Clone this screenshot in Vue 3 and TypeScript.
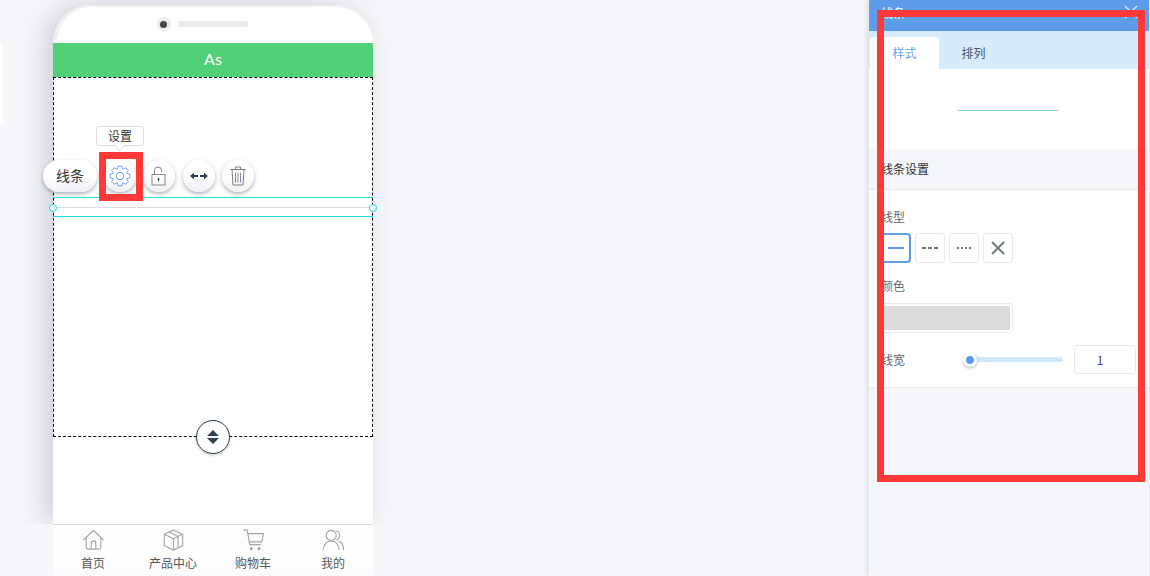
<script setup lang="ts">
const navItems = ["首页", "产品中心", "购物车", "我的"];
const lineTypes = ["solid", "dashed", "dotted", "none"];

// 8-tooth cog outline for the settings button
const gearPath = (() => {
  const pts: string[] = [];
  for (let i = 0; i < 8; i++) {
    const a = (i * Math.PI) / 4;
    const steps: [number, number][] = [
      [7.4, a - 0.34],
      [10, a - 0.2],
      [10, a + 0.2],
      [7.4, a + 0.34],
    ];
    for (const [r, t] of steps) {
      pts.push(`${(11 + r * Math.cos(t)).toFixed(2)} ${(11 + r * Math.sin(t)).toFixed(2)}`);
    }
  }
  return "M" + pts.join("L") + "Z";
})();
</script>

<template>
  <div class="page">
    <div class="stage">
      <div class="side-tabs">
        <div class="side-tab"></div>
        <div class="side-tab"></div>
      </div>
      <div class="phone">
        <div class="phone-body">
          <div class="phone-top">
            <span class="camera"><i></i></span>
            <span class="speaker"></span>
          </div>
          <div class="phone-title">As</div>
          <div class="canvas">
            <div class="selection">
              <div class="tooltip">设置</div>
              <div class="toolbar">
                <button class="tool pill">线条</button>
                <button class="tool">
                  <svg width="22" height="22" viewBox="0 0 22 22" fill="none" stroke="#6f9ff0" stroke-width="1">
                    <path :d="gearPath" stroke-linejoin="round" />
                    <circle cx="11" cy="11" r="3.8" />
                  </svg>
                </button>
                <button class="tool">
                  <svg width="16" height="20" viewBox="0 0 16 20" fill="none" stroke-width="1">
                    <path d="M3.500 8V4.500a3.500 3.500 0 0 1 7 0V6" stroke="#8a8078" />
                    <rect x="1" y="8.500" width="13" height="10.500" stroke="#7f8aa0" />
                    <circle cx="7.500" cy="13" r="1" fill="#2f3b4c" stroke="none" />
                    <path d="M7.500 13v2" stroke="#2f3b4c" />
                  </svg>
                </button>
                <button class="tool">
                  <svg width="18" height="8" viewBox="0 0 18 8" fill="#2f3b4c">
                    <path d="M0 4l4-3.200v2.200h4v2H4v2.200zM18 4l-4-3.200v2.200h-4v2h4v2.200z" />
                  </svg>
                </button>
                <button class="tool">
                  <svg width="16" height="20" viewBox="0 0 16 20" fill="none" stroke="#85796f" stroke-width="1">
                    <path d="M0.500 3.500h15M5.500 3.500V1h5v2.500M2 3.500l1 15.500h10l1-15.500" />
                    <path d="M5.500 6.500v10M8 6.500v10M10.500 6.500v10" stroke="#7f8aa0" />
                  </svg>
                </button>
              </div>
              <div class="line-box">
                <span class="line-rule"></span>
                <span class="handle left"></span>
                <span class="handle right"></span>
              </div>
              <div class="resize">
                <svg width="12" height="14" viewBox="0 0 12 14" fill="#2e4358">
                  <path d="M6 0l6 6H0zM6 14L0 8h12z" />
                </svg>
              </div>
              <span class="mark"></span>
            </div>
          </div>
        </div>
        <div class="nav-wrap">
          <div class="nav">
            <div v-for="(item, i) in navItems" :key="item" class="nav-item">
              <svg width="23" height="22" viewBox="0 0 24 24" fill="none" stroke="#a3a3a3" stroke-width="1.200">
                <template v-if="i === 0">
                  <path d="M1 12L12 1.500 23 12M4 9.500v10.500a2 2 0 0 0 2 2h12a2 2 0 0 0 2-2V9.500" />
                  <path d="M9.500 22v-6.500a2.500 2.500 0 0 1 5 0V22" />
                </template>
                <template v-else-if="i === 1">
                  <path d="M12 1l10 4.800v12.400L12 23 2 18.200V5.800z" />
                  <path d="M2 5.800l10 4.700 10-4.700M12 10.500V23M7 3.400l10 4.800v12.400" />
                </template>
                <template v-else-if="i === 2">
                  <path d="M1 1h4l3 16h12M5.800 5H23l-2 9H7.400" />
                  <circle cx="9.500" cy="21.500" r="1" fill="#8a8a8a" />
                  <circle cx="18" cy="21.500" r="1" fill="#8a8a8a" />
                </template>
                <template v-else>
                  <circle cx="9.500" cy="7" r="5.500" />
                  <path d="M1 23c0-6 3.500-10 8.500-10s8.500 4 8.500 10M15 1.800a5.500 5.500 0 0 1 0 10.400M18 13.500c3 1.200 5 4.500 5 9.500" />
                </template>
              </svg>
              <span>{{ item }}</span>
            </div>
          </div>
          <div class="nav-base"></div>
        </div>
      </div>
    </div>

    <aside class="panel">
      <header class="panel-head">
        <span>线条</span>
        <svg width="14" height="14" viewBox="0 0 14 14" stroke="#e8f1fc" stroke-width="1.200">
          <path d="M1 1l12 12M13 1L1 13" />
        </svg>
      </header>
      <div class="tabs">
        <div class="tab active">样式</div>
        <div class="tab">排列</div>
      </div>
      <div class="preview"><span></span></div>
      <div class="section-head">线条设置</div>
      <div class="form">
        <div class="label">线型</div>
        <div class="types">
          <div v-for="(t, i) in lineTypes" :key="t" class="type" :class="{ active: i === 0 }">
            <span v-if="t !== 'none'" class="stroke" :class="t"></span>
            <svg v-else width="14" height="14" viewBox="0 0 14 14" stroke="#6f7680" stroke-width="1.800">
              <path d="M1 1l12 12M13 1L1 13" />
            </svg>
          </div>
        </div>
        <div class="label colour-label">颜色</div>
        <div class="colour"><span></span></div>
        <div class="width-row">
          <div class="label">线宽</div>
          <div class="slider"><span class="thumb"></span></div>
          <div class="num">1</div>
        </div>
      </div>
    </aside>
    <span class="outline"></span>
  </div>
</template>

<style scoped>
.page {
  position: relative;
  display: flex;
  height: 576px;
  overflow: hidden;
  background: #f6f7fb;
  font-family: "Noto Sans CJK SC", "Liberation Sans", sans-serif;
  font-size: 12px;
  color: #444;
}
.stage {
  flex: 0 0 869px;
  display: flex;
  align-items: flex-start;
}
.side-tabs {
  flex: 0 0 3px;
  margin-top: 43px;
  display: flex;
  flex-direction: column;
  gap: 1px;
}
.side-tab {
  height: 40px;
  background: #fff;
}
.phone {
  width: 320px;
  height: 571px;
  margin: 5px 0 0 50px;
  display: flex;
  flex-direction: column;
}
.phone-body {
  height: 519px;
  background: #fff;
  border-radius: 38px 38px 0 0;
  box-shadow: -8px 0 26px rgba(60, 70, 90, 0.22);
  display: flex;
  flex-direction: column;
}
.phone-top {
  height: 38px;
  flex: none;
  box-sizing: border-box;
  border: solid #f0f0f0;
  border-width: 2px 0 0 4px;
  border-radius: 38px 38px 0 0;
  padding: 0 26px 2px 0;
  display: flex;
  align-items: center;
  justify-content: center;
  gap: 7px;
  background: #fff;
}
.camera {
  width: 14px;
  height: 14px;
  border-radius: 50%;
  background: #ececec;
  display: flex;
  align-items: center;
  justify-content: center;
}
.camera i {
  width: 7px;
  height: 7px;
  border-radius: 50%;
  background: #444;
}
.speaker {
  width: 70px;
  height: 6px;
  border-radius: 3px;
  background: #ebebeb;
}
.phone-title {
  height: 34px;
  flex: none;
  background: #50d077;
  color: #fff;
  font-family: Lato, sans-serif;
  font-size: 16px;
  line-height: 32px;
  text-align: center;
}
.canvas {
  flex: 1;
  background: #fff;
}
.selection {
  position: relative;
  height: 360px;
  box-sizing: border-box;
  border: 1px dashed #000;
}
.tooltip {
  position: absolute;
  left: 42px;
  top: 48px;
  width: 48px;
  height: 20px;
  box-sizing: border-box;
  border: 1px solid #ddd;
  border-radius: 3px;
  background: #fff;
  line-height: 18px;
  text-align: center;
  color: #333;
}
.tooltip::after {
  content: "";
  position: absolute;
  left: 19px;
  bottom: -5px;
  width: 7px;
  height: 7px;
  background: #fff;
  transform: rotate(45deg);
  border-right: 1px solid #e4e4e4;
  border-bottom: 1px solid #e4e4e4;
  box-sizing: border-box;
}
.toolbar {
  position: absolute;
  left: -11px;
  top: 82px;
  display: flex;
  gap: 7.200px;
}
.tool {
  width: 32px;
  height: 32px;
  padding: 0;
  border: 0;
  border-radius: 16px;
  background: linear-gradient(#fff 50%, #eff0f3);
  box-shadow: 0 2px 4px rgba(50, 60, 80, 0.4);
  display: flex;
  align-items: center;
  justify-content: center;
  font: inherit;
  font-size: 14px;
  line-height: 30px;
  color: #333;
}
.tool.pill {
  width: 54px;
  padding-bottom: 2px;
}
.line-box {
  position: absolute;
  left: -1px;
  right: -1px;
  top: 119px;
  height: 20px;
  box-sizing: border-box;
  border-top: 1px solid #19e0ea;
  border-bottom: 1px solid #19e0ea;
}
.line-rule {
  position: absolute;
  left: 0;
  right: 0;
  top: 9px;
  height: 1px;
  background: #dcdcdc;
}
.handle {
  position: absolute;
  top: 6px;
  width: 8px;
  height: 8px;
  box-sizing: border-box;
  border: 1px solid #19d8e6;
  border-radius: 50%;
  background: #fff;
}
.handle.left {
  left: -4px;
}
.handle.right {
  right: -4px;
}
.resize {
  position: absolute;
  left: 142px;
  bottom: -18px;
  width: 34px;
  height: 34px;
  box-sizing: border-box;
  border: 1px solid #2e4358;
  border-radius: 50%;
  background: #fff;
  box-shadow: 0 1px 3px rgba(46, 67, 88, 0.3);
  display: flex;
  align-items: center;
  justify-content: center;
}
.mark {
  position: absolute;
  left: 45px;
  top: 74px;
  width: 44px;
  height: 49px;
  box-sizing: border-box;
  border: 7px solid #ff3838;
}
.nav-wrap {
  position: relative;
  z-index: 1;
  margin: 0 -40px;
  padding: 0 40px;
  background: #f6f7fb;
}
.nav {
  height: 46px;
  box-sizing: border-box;
  border-top: 1px solid #dcdcdc;
  background: #fdfdfd;
  display: flex;
}
.nav-base {
  height: 6px;
  background: #fafbfd;
}
.nav-item {
  flex: 1;
  display: flex;
  flex-direction: column;
  align-items: center;
  padding-top: 4px;
  line-height: 14px;
  color: #555;
}
.nav-item svg {
  display: block;
  flex: none;
  margin-bottom: 5px;
}
.nav-item span {
  flex: none;
}
.panel {
  flex: 0 0 280px;
  box-shadow: -2px 0 5px rgba(60, 70, 90, 0.14);
  border-right: 1px solid #e6e6ee;
  box-sizing: content-box;
  position: relative;
}
.panel-head {
  height: 31px;
  box-sizing: border-box;
  padding: 5px 11px 0 12px;
  background: #5c9ce8;
  color: #fff;
  display: flex;
  align-items: flex-start;
  justify-content: space-between;
}
.panel-head span {
  line-height: 16px;
}
.tabs {
  height: 38px;
  box-sizing: border-box;
  padding: 6px 0 0 1px;
  background: #d6ebfb;
  display: flex;
}
.tab {
  width: 69px;
  line-height: 32px;
  text-align: center;
  color: #45586c;
  border-radius: 4px 4px 0 0;
}
.tab.active {
  background: #fff;
  color: #6a9fe8;
}
.preview {
  height: 80px;
  background: #fff;
  display: flex;
  align-items: center;
  justify-content: center;
}
.preview span {
  width: 100px;
  height: 1px;
  margin: 2px 2px 0 0;
  background: #7fcdf5;
}
.section-head {
  height: 41px;
  box-sizing: border-box;
  padding-left: 12px;
  line-height: 40px;
  background: #f5f6fa;
  border-bottom: 1px solid #e8eaf0;
  color: #333;
}
.form {
  height: 198px;
  box-sizing: border-box;
  padding: 18px 13px 0 12px;
  background: #fff;
  border-bottom: 1px solid #e8eaf0;
}
.label {
  line-height: 17px;
  color: #666;
}
.types {
  display: flex;
  gap: 4px;
  margin-top: 8px;
}
.type {
  width: 30px;
  height: 30px;
  box-sizing: border-box;
  border: 1px solid #e6e9f2;
  border-radius: 3px;
  display: flex;
  align-items: center;
  justify-content: center;
}
.type.active {
  border: 2px solid #5c9ce8;
  border-radius: 4px;
}
.stroke {
  width: 16px;
  height: 2px;
  background: repeating-linear-gradient(90deg, #6f7680 0 4px, transparent 4px 6px);
}
.stroke.solid {
  background: #5c9ce8;
}
.stroke.dotted {
  width: 14px;
  background: repeating-linear-gradient(90deg, #6f7680 0 2px, transparent 2px 4px);
}
.colour-label {
  margin-top: 14px;
}
.colour {
  width: 132px;
  height: 30px;
  margin-top: 9px;
  box-sizing: border-box;
  padding: 2px;
  border: 1px solid #e8ebf3;
  border-radius: 3px;
}
.colour span {
  display: block;
  height: 100%;
  background: #dcdcdc;
}
.width-row {
  display: flex;
  align-items: center;
  margin-top: 12px;
}
.width-row .label {
  width: 89px;
}
.slider {
  position: relative;
  width: 93px;
  height: 5px;
  border-radius: 3px;
  background: #cfe7fb;
}
.thumb {
  position: absolute;
  left: -7px;
  top: -4.500px;
  width: 14px;
  height: 14px;
  box-sizing: border-box;
  border: 3.500px solid #fff;
  border-radius: 50%;
  background: #5c9ce8;
  box-shadow: 0 1px 3px rgba(60, 70, 90, 0.4);
}
.num {
  width: 62px;
  height: 29px;
  margin-left: 11px;
  box-sizing: border-box;
  padding-right: 10px;
  border: 1px solid #e6e9f2;
  border-radius: 3px;
  line-height: 27px;
  text-align: center;
  color: #3f3f9e;
}
.outline {
  position: absolute;
  left: 877px;
  top: 10px;
  width: 268px;
  height: 472px;
  box-sizing: border-box;
  border: 7px solid #ff3838;
}
</style>
